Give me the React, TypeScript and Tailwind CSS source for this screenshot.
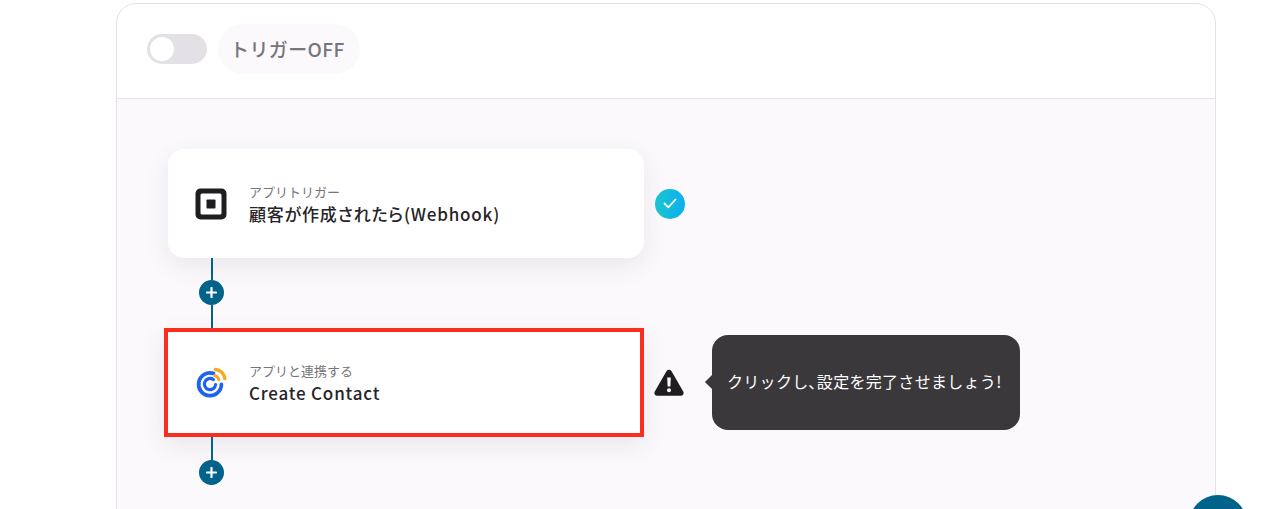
const jp = "font-['Noto_Sans_CJK_JP','Noto_Sans',sans-serif]";

function SquareLogo() {
  return (
    <svg width="32" height="32" viewBox="0 0 32 32">
      <path
        fillRule="evenodd"
        fill="#1f1d20"
        d="M5.5 0.5h21a5 5 0 0 1 5 5v21a5 5 0 0 1-5 5h-21a5 5 0 0 1-5-5v-21a5 5 0 0 1 5-5zM7 5.5a1.5 1.5 0 0 0-1.5 1.5v18a1.5 1.5 0 0 0 1.5 1.5h18a1.5 1.5 0 0 0 1.5-1.5v-18a1.5 1.5 0 0 0-1.5-1.5z"
      />
      <rect x="11.5" y="11.5" width="9" height="9" rx="0.8" fill="#1f1d20" />
    </svg>
  );
}

function ContactLogo() {
  return (
    <svg width="32" height="32" viewBox="0 0 32 32" fill="none">
      <path d="M18.5 6.4A11.4 11.4 0 1 0 26.4 17.5" stroke="#1f62f0" strokeWidth="3.8" strokeLinecap="round" />
      <path d="M18.4 12.6A5.6 5.6 0 1 0 20.6 17.5" stroke="#1f62f0" strokeWidth="3.2" strokeLinecap="round" />
      <path d="M20.5 2.5A10.6 10.6 0 0 1 29.8 11.5" stroke="#f7a823" strokeWidth="3.6" strokeLinecap="round" />
      <path d="M19.8 8.6A5.4 5.4 0 0 1 23.8 12.8" stroke="#f7a823" strokeWidth="3" strokeLinecap="round" />
    </svg>
  );
}

function Plus() {
  return (
    <div className="flex h-[25px] w-[25px] items-center justify-center rounded-full bg-[#01638a]">
      <svg width="11" height="11" viewBox="0 0 11 11">
        <path d="M5.5 1v9M1 5.5h9" stroke="#fff" strokeWidth="2.2" strokeLinecap="round" />
      </svg>
    </div>
  );
}

function StepText({ label, title }: { label: string; title: string }) {
  return (
    <div className="ml-[22px] flex flex-col pt-[2px]">
      <span className="text-[13px] leading-[16px] text-[#77757a]">{label}</span>
      <span className="mt-[1px] text-[17px] leading-[25px] font-medium tracking-[0.8px] text-[#262428] [font-feature-settings:'palt']">{title}</span>
    </div>
  );
}

export default function App() {
  return (
    <div className={`relative h-[509px] w-[1267px] overflow-hidden bg-white ${jp}`}>
      <div className="ml-[116px] mt-[3px] h-[600px] w-[1100px] rounded-[20px] border border-[#e4e2e6] bg-white">
        {/* Header */}
        <div className="flex h-[95px] items-center border-b border-[#e4e2e6] pb-[4px] pl-[30px]">
          <div className="flex h-[30px] w-[60px] items-center rounded-full bg-[#e3e1e5] pl-[3px]">
            <div className="h-[24px] w-[24px] rounded-full bg-white" />
          </div>
          <div className="ml-[11px] flex h-[50px] w-[142px] items-center rounded-full bg-[#fbf9fc] pl-[12px] text-[19px] font-medium tracking-[0.4px] text-[#77757a]">
            トリガーOFF
          </div>
        </div>

        {/* Flow */}
        <div className="h-[600px] rounded-b-[20px] bg-[#fbf9fc] pl-[51px] pt-[50px]">
          <div className="flex items-center">
            <div className="flex h-[109px] w-[476px] items-center rounded-[16px] bg-white pl-[27px] shadow-[0_8px_24px_rgba(60,50,70,0.09)]">
              <SquareLogo />
              <StepText label="アプリトリガー" title="顧客が作成されたら(Webhook)" />
            </div>
            <div className="ml-[11px] flex h-[30px] w-[30px] items-center justify-center rounded-full bg-gradient-to-r from-[#1cc4cf] to-[#0cb0ee]">
              <svg width="14" height="11" viewBox="0 0 14 11" fill="none">
                <path d="M1.5 5.5l3.8 3.8L12.5 1.5" stroke="#fff" strokeWidth="1.8" strokeLinecap="round" strokeLinejoin="round" />
              </svg>
            </div>
          </div>

          <div className="ml-[31px] flex w-[25px] flex-col items-center">
            <div className="h-[22px] w-[2px] bg-[#01638a]" />
            <Plus />
            <div className="h-[23px] w-[2px] bg-[#01638a]" />
          </div>

          <div className="-ml-[4px] flex items-center">
            <div className="flex h-[109px] w-[480px] items-center border-[4px] border-[#fb2d1e] bg-white pl-[27px] shadow-[0_8px_24px_rgba(60,50,70,0.09)]">
              <ContactLogo />
              <StepText label="アプリと連携する" title="Create Contact" />
            </div>
            <svg className="ml-[10px]" width="30" height="27" viewBox="0 0 30 27">
              <path
                fillRule="evenodd"
                fill="#1f1d20"
                d="M12.6 2a2.8 2.8 0 0 1 4.8 0l11.8 20.6a2.8 2.8 0 0 1-2.4 4.2H3.2a2.8 2.8 0 0 1-2.4-4.2zM13.2 8.5l.4 9h2.8l.4-9zM15 19.3a2 2 0 1 0 0 4a2 2 0 0 0 0-4z"
              />
            </svg>
            {/* Tooltip */}
            <div className="relative ml-[28px] flex h-[95px] w-[308px] items-center rounded-[16px] bg-[#3a383b] pb-[4px] pl-[15px] text-[16px] tracking-[0.3px] text-white">
              <span className="absolute -left-[5px] top-[42px] h-[10px] w-[10px] rotate-45 bg-[#3a383b]" />
              <span>
                クリックし<span className="[font-feature-settings:'palt']">、</span>設定を完了させましょう!
              </span>
            </div>
          </div>

          <div className="ml-[31px] flex w-[25px] flex-col items-center">
            <div className="h-[23px] w-[2px] bg-[#01638a]" />
            <Plus />
          </div>
        </div>
      </div>

      {/* Floating action button */}
      <div className="absolute left-[1189px] top-[495px] h-[58px] w-[58px] rounded-full bg-[#01638a]" />
    </div>
  );
}
